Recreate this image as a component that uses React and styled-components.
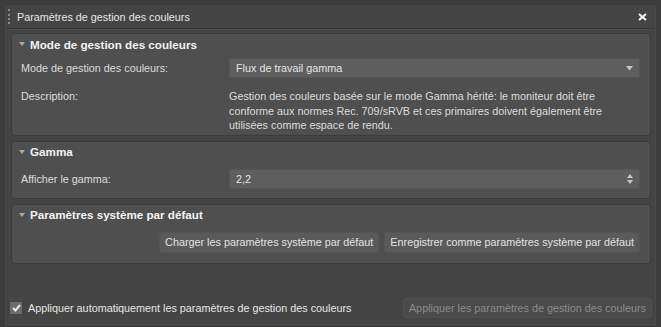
import styled, { createGlobalStyle } from "styled-components";

const GlobalStyle = createGlobalStyle`
  html, body {
    margin: 0;
    padding: 0;
    background: #3c3c3c;
  }
  body {
    font-family: "Liberation Sans", Arial, sans-serif;
    font-size: 10.8px;
    color: #dcdcdc;
  }
`;

const Window = styled.div`
  width: 661px;
  height: 327px;
  box-sizing: border-box;
  padding: 5px 5px 2px 5px;
  display: flex;
  flex-direction: column;
`;

const Frame = styled.div`
  flex: 1;
  background: #444444;
  border: 1px solid #4a4a4a;
  border-top: none;
  display: flex;
  flex-direction: column;
`;

const TitleBar = styled.div`
  height: 23px;
  display: flex;
  align-items: center;
  padding: 0 8px 0 2px;
  border-bottom: 1px solid #363636;
  box-shadow: 0 1px 0 #4c4c4c;
`;

const Grip = styled.div`
  width: 0;
  height: 15px;
  border-left: 2px dotted #8a8a8a;
  margin-right: 7px;
`;

const Title = styled.div`
  flex: 1;
  color: #e6e6e6;
`;

const Body = styled.div`
  padding: 4px 4px 0 5px;
  display: flex;
  flex-direction: column;
  gap: 5px;
`;

const Panel = styled.div`
  background: #4f4f4f;
  border: 1px solid #3b3b3b;
  border-radius: 3px;
  padding-bottom: ${(p) => p.$bottom || "10px"};
`;

const PanelHeader = styled.div`
  height: 20px;
  display: flex;
  align-items: center;
  padding-left: 7px;
  font-weight: bold;
  font-size: 11.65px;
  color: #f2f2f2;
`;

const Caret = styled.span`
  width: 0;
  height: 0;
  border-left: 3px solid transparent;
  border-right: 3px solid transparent;
  border-top: 4px solid #a8a8a8;
  margin-right: 5px;
`;

const Row = styled.div`
  display: grid;
  grid-template-columns: 208px 1fr;
  align-items: ${(p) => p.$align || "center"};
  padding: 0 10px 0 9px;
  margin-top: ${(p) => p.$top || "0"};
`;

const Label = styled.div`
  color: #dcdcdc;
  padding-top: ${(p) => p.$pad || "0"};
`;

const Field = styled.div`
  height: 20px;
  background: #5e5e5e;
  border: 1px solid #555;
  box-sizing: border-box;
  border-radius: 1px;
  display: flex;
  align-items: center;
  padding: 0 6px 0 6px;
  color: #e4e4e4;
`;

const FieldText = styled.span`
  flex: 1;
`;

const Description = styled.div`
  line-height: 14.5px;
  color: #dcdcdc;
`;

const ButtonRow = styled.div`
  display: flex;
  justify-content: flex-end;
  gap: 5px;
  padding: 0 10px;
  margin-top: 7px;
`;

const Button = styled.button`
  height: ${(p) => (p.disabled ? "20px" : "21px")};
  font-family: inherit;
  font-size: 10.8px;
  padding: 0 5px;
  background: ${(p) => (p.disabled ? "#4a4a4a" : "#5a5a5a")};
  color: ${(p) => (p.disabled ? "#8a8a8a" : "#e2e2e2")};
  border: 1px solid ${(p) => (p.disabled ? "#505050" : "#555")};
  border-radius: 3px;
`;

const Footer = styled.div`
  margin-top: auto;
  display: flex;
  align-items: center;
  justify-content: space-between;
  padding: 0 3px 6px 4px;
`;

const CheckLabel = styled.label`
  display: flex;
  align-items: center;
  gap: 6px;
  color: #e6e6e6;
`;

const CheckBox = styled.span`
  width: 12px;
  height: 12px;
  background: #6b6b6b;
  display: flex;
  align-items: center;
  justify-content: center;
`;

const ArrowDown = () => (
  <svg width="7" height="5" viewBox="0 0 7 5">
    <path d="M0 0h7L3.5 4.5z" fill="#c8c8c8" />
  </svg>
);

const Spin = () => (
  <svg width="6" height="10" viewBox="0 0 6 10">
    <path d="M0 4h6L3 0z M0 6h6L3 10z" fill="#c8c8c8" />
  </svg>
);

export default function App() {
  return (
    <>
      <GlobalStyle />
      <Window>
        <Frame>
          <TitleBar>
            <Grip />
            <Title>Paramètres de gestion des couleurs</Title>
            <svg width="9" height="8" viewBox="0 0 9 8">
              <path d="M1 1l7 6M8 1L1 7" stroke="#f4f4f4" strokeWidth="2" />
            </svg>
          </TitleBar>
          <Body>
            <Panel $bottom="2px">
              <PanelHeader>
                <Caret />
                Mode de gestion des couleurs
              </PanelHeader>
              <Row $top="4px">
                <Label>Mode de gestion des couleurs:</Label>
                <Field>
                  <FieldText>Flux de travail gamma</FieldText>
                  <ArrowDown />
                </Field>
              </Row>
              <Row $align="start" $top="11px">
                <Label $pad="1px">Description:</Label>
                <Description>
                  Gestion des couleurs basée sur le mode Gamma hérité: le moniteur doit être
                  <br />
                  conforme aux normes Rec. 709/sRVB et ces primaires doivent également être
                  <br />
                  utilisées comme espace de rendu.
                </Description>
              </Row>
            </Panel>
            <Panel $bottom="9px">
              <PanelHeader>
                <Caret />
                Gamma
              </PanelHeader>
              <Row $top="7px">
                <Label>Afficher le gamma:</Label>
                <Field>
                  <FieldText>2,2</FieldText>
                  <Spin />
                </Field>
              </Row>
            </Panel>
            <Panel>
              <PanelHeader>
                <Caret />
                Paramètres système par défaut
              </PanelHeader>
              <ButtonRow>
                <Button>Charger les paramètres système par défaut</Button>
                <Button>Enregistrer comme paramètres système par défaut</Button>
              </ButtonRow>
            </Panel>
          </Body>
          <Footer>
            <CheckLabel>
              <CheckBox>
                <svg width="9" height="8" viewBox="0 0 9 8">
                  <path d="M1 4l2.5 2.5L8 1" stroke="#e8e8e8" strokeWidth="2" fill="none" />
                </svg>
              </CheckBox>
              Appliquer automatiquement les paramètres de gestion des couleurs
            </CheckLabel>
            <Button disabled>Appliquer les paramètres de gestion des couleurs</Button>
          </Footer>
        </Frame>
      </Window>
    </>
  );
}
